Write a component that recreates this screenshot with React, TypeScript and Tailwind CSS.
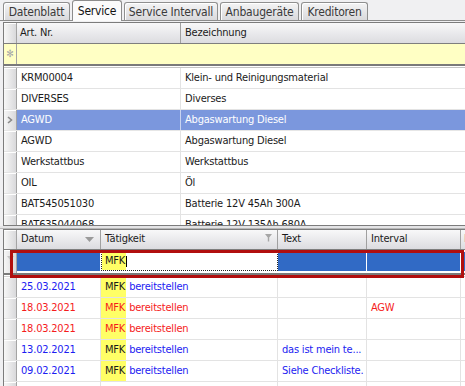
import React from "react"

const tabs = [
  { label: "Datenblatt", w: "w-[67px]" },
  { label: "Service", w: "w-[50px]", active: true },
  { label: "Service Intervall", w: "w-[94px]" },
  { label: "Anbaugeräte", w: "w-[79px]" },
  { label: "Kreditoren", w: "w-[67px]" },
]

const articles = [
  ["KRM00004", "Klein- und Reinigungsmaterial"],
  ["DIVERSES", "Diverses"],
  ["AGWD", "Abgaswartung Diesel"],
  ["AGWD", "Abgaswartung Diesel"],
  ["Werkstattbus", "Werkstattbus"],
  ["OIL", "Öl"],
  ["BAT545051030", "Batterie 12V 45Ah 300A"],
  ["BAT635044068", "Batterie 12V 135Ah 680A"],
]

const BLUE = "text-[#1c1cf2]"
const RED = "text-[#f51c1c]"

const services = [
  { date: "25.03.2021", red: false, text: "", interval: "" },
  { date: "18.03.2021", red: true, text: "", interval: "AGW" },
  { date: "18.03.2021", red: true, text: "", interval: "" },
  { date: "13.02.2021", red: false, text: "das ist mein te...", interval: "" },
  { date: "09.02.2021", red: false, text: "Siehe Checkliste.", interval: "" },
]

function Indicator({ children, yellow }: { children?: React.ReactNode; yellow?: boolean }) {
  return (
    <div
      className={
        "w-[13px] shrink-0 border-r border-[#a4a4a4] flex items-center justify-center " +
        (yellow ? "bg-[#ffffc4]" : "bg-linear-to-r from-[#f7f7f7] to-[#d9d9db] shadow-[inset_0_1px_0_#ffffff]")
      }
    >
      {children}
    </div>
  )
}

function Funnel({ className }: { className?: string }) {
  return (
    <svg width="7" height="8" viewBox="0 0 7 8" className={className}>
      <path d="M0 0 H7 L4.2 3.5 V7.5 H2.8 V3.5 Z" fill="currentColor" />
    </svg>
  )
}

export default function App() {
  return (
    <div className="w-[465px] h-[386px] overflow-hidden bg-[#f0f0f2] font-['DejaVu_Sans_Condensed','Liberation_Sans',Arial,sans-serif] text-[11px] tracking-[-0.2px] text-[#1b1b1b]">
      {/* Tabs */}
      <div className="h-[21px] flex items-end gap-[2px] pl-[3px] border-b border-[#8c8c8c] relative">
        {tabs.map((t) =>
          t.active ? (
            <div
              key={t.label}
              className={`${t.w} h-[21px] -mb-px relative z-10 flex items-center justify-center rounded-t-[3px] border border-b-0 border-[#8c8c8c] bg-[#fbfbfb] text-[#111] text-[12px]`}
            >
              {t.label}
            </div>
          ) : (
            <div
              key={t.label}
              className={`${t.w} h-[18px] flex items-center justify-center rounded-t-[3px] border border-b-0 border-[#8f8f8f] bg-linear-to-b from-[#f4f4f5] to-[#d9d9dc] text-[#3a3a3a] text-[12px] shadow-[inset_1px_1px_0_#ffffff]`}
            >
              {t.label}
            </div>
          )
        )}
      </div>

      {/* Top grid */}
      <div className="ml-[3px] mt-px h-[204px] overflow-hidden border border-r-0 border-[#7c7c7c] bg-white">
        <div className="h-[21px] flex border-b border-[#7e7e7e] bg-linear-to-b from-[#f8f8f9] to-[#dcdce0]">
          <Indicator />
          <div className="w-[164px] shrink-0 border-r border-[#a0a0a0] px-[3px] flex items-center">Art. Nr.</div>
          <div className="flex-1 px-[4px] flex items-center">Bezeichnung</div>
        </div>
        <div className="h-[22px] flex border-b-2 border-[#7a7a7a] bg-[#ffffc4]">
          <Indicator yellow>
            <span className="text-[#a8a8a8] text-[10px] leading-none">✻</span>
          </Indicator>
          <div className="flex-1" />
        </div>
        <div className="h-[2px] border-b border-[#c4c4c4] bg-white" />
        {articles.map(([nr, name], i) => {
          const sel = i === 2
          return (
            <div
              key={i}
              className={"h-[21px] flex border-b " + (sel ? "bg-[#7b97dd] text-white border-[#e6e6e6]" : "border-[#e3e3e3]")}
            >
              <Indicator>
                {sel && (
                  <svg width="6" height="8" viewBox="0 0 6 8">
                    <path d="M1 1 L4.5 4 L1 7" fill="none" stroke="#8a8a8a" strokeWidth="1.6" />
                  </svg>
                )}
              </Indicator>
              <div className={"w-[164px] shrink-0 border-r px-[4px] flex items-center " + (sel ? "border-[#c8d3f0]" : "border-[#e3e3e3]")}>
                {nr}
              </div>
              <div className="flex-1 px-[4px] flex items-center whitespace-nowrap">{name}</div>
            </div>
          )
        })}
      </div>

      {/* Splitter */}
      <div className="h-[3px] bg-[#e4e4e6] border-b border-[#b8b8b8]" />

      {/* Bottom grid */}
      <div className="relative ml-[3px] h-[158px] overflow-hidden border border-r-0 border-b-0 border-[#7c7c7c] bg-white">
        <div className="h-[20px] flex border-b border-[#7e7e7e] bg-linear-to-b from-[#f8f8f9] to-[#dcdce0] whitespace-nowrap">
          <Indicator />
          <div className="w-[84px] shrink-0 border-r border-[#a0a0a0] px-[4px] flex items-center justify-between">
            <span>Datum</span>
            <svg width="9" height="5" viewBox="0 0 9 5" className="mr-[2px]">
              <path d="M0 0 H9 L4.5 5 Z" fill="#9a9a9a" />
            </svg>
          </div>
          <div className="w-[177px] shrink-0 border-r border-[#a0a0a0] px-[4px] flex items-center justify-between">
            <span>Tätigkeit</span>
            <Funnel className="text-[#a6a6a6] mb-[4px] mr-[1px]" />
          </div>
          <div className="w-[89px] shrink-0 border-r border-[#a0a0a0] px-[4px] flex items-center">Text</div>
          <div className="w-[94px] shrink-0 border-r border-[#a0a0a0] px-[4px] flex items-center">Interval</div>
          <div className="flex-1 px-[3px] flex items-center text-[#2a2a70]">M</div>
        </div>

        {/* Filter row */}
        <div className="h-[25px] flex border-b-2 border-[#7a7a7a]">
          <Indicator>
            <Funnel className="text-[#c4c4c4] mb-[3px]" />
          </Indicator>
          <div className="w-[84px] shrink-0 border-r border-[#ffffff] bg-[#316ac5] mt-[2px] mb-[2px]" />
          <div className="w-[177px] shrink-0 mt-[2px] mb-[2px] bg-white border border-dotted border-[#222] flex items-stretch">
            <span className="bg-[#ffff66] pl-[3px] pr-[1px] flex items-center">MFK</span>
            <span className="w-px bg-black my-[3px]" />
          </div>
          <div className="w-[89px] shrink-0 border-r border-[#ffffff] bg-[#316ac5] mt-[2px] mb-[2px]" />
          <div className="w-[94px] shrink-0 border-r border-[#ffffff] bg-[#316ac5] mt-[2px] mb-[2px]" />
          <div className="flex-1 bg-[#316ac5] mt-[2px] mb-[2px]" />
        </div>
        <div className="h-[2px] border-b border-[#d0d0d0]" />

        {services.map((s, i) => {
          const c = s.red ? RED : BLUE
          return (
            <div key={i} className="h-[21px] flex border-b border-[#e3e3e3] whitespace-nowrap">
              <Indicator />
              <div className={`w-[84px] shrink-0 border-r border-[#e3e3e3] px-[4px] flex items-center ${c}`}>{s.date}</div>
              <div className="w-[177px] shrink-0 border-r border-[#e3e3e3] flex items-stretch">
                <span className={`bg-[#ffff66] pl-[4px] pr-[1px] flex items-center ${s.red ? RED : "text-[#1b1b1b]"}`}>MFK</span>
                <span className={`pl-[3px] flex items-center ${c}`}>bereitstellen</span>
              </div>
              <div className={`w-[89px] shrink-0 border-r border-[#e3e3e3] px-[4px] flex items-center ${c}`}>{s.text}</div>
              <div className={`w-[94px] shrink-0 border-r border-[#e3e3e3] px-[4px] flex items-center ${c}`}>{s.interval}</div>
              <div className="flex-1" />
            </div>
          )
        })}
        <div className="h-[21px] flex">
          <Indicator />
          <div className="w-[84px] shrink-0 border-r border-[#e3e3e3]" />
          <div className="w-[177px] shrink-0 border-r border-[#e3e3e3]" />
          <div className="w-[89px] shrink-0 border-r border-[#e3e3e3]" />
          <div className="w-[94px] shrink-0 border-r border-[#e3e3e3]" />
        </div>

        {/* Highlight frame around filter row */}
        <div className="absolute left-[6px] top-[20px] w-[454px] h-[28px] border-[3px] border-[#b10e0e]" />
      </div>
    </div>
  )
}
